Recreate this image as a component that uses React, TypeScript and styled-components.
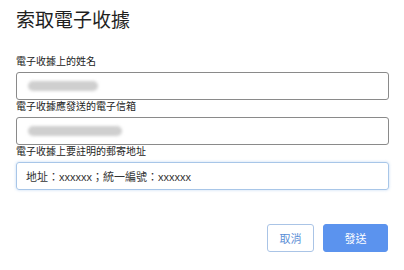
import React from 'react';
import styled, { createGlobalStyle } from 'styled-components';

const Global = createGlobalStyle`
  body {
    margin: 0;
    background: #fff;
    font-family: "Liberation Sans", "Noto Sans CJK TC", sans-serif;
    color: #222;
  }
`;

const Dialog = styled.div`
  width: 404px;
  height: 270px;
  box-sizing: border-box;
  padding: 9px 15px 0 16px;
`;

const Title = styled.h1`
  margin: 0 0 22px;
  font-size: 19px;
  line-height: 24px;
  font-weight: 400;
  color: #1f1f1f;
`;

const Label = styled.div`
  font-size: 10px;
  line-height: 13px;
  color: #222;
  margin-bottom: 4px;
`;

const Field = styled.div<{ $focused?: boolean }>`
  box-sizing: border-box;
  height: 28px;
  display: flex;
  align-items: center;
  padding: 0 9px;
  border: 1px solid ${p => (p.$focused ? '#a8c6e8' : '#8a8a8a')};
  border-radius: 3px;
  box-shadow: ${p => (p.$focused ? '0 0 3px rgba(120,170,230,0.45)' : 'none')};
  font-size: 11px;
  color: #333;
`;

const Blur = styled.span<{ $w: number }>`
  display: block;
  width: ${p => p.$w}px;
  height: 10px;
  border-radius: 5px;
  background: #cfcfcf;
  filter: blur(1.5px);
  margin-left: 2px;
`;

const Footer = styled.div`
  display: flex;
  justify-content: flex-end;
  gap: 9px;
  margin-top: 34px;
  padding-right: 1px;
`;

const Button = styled.button<{ $primary?: boolean }>`
  box-sizing: border-box;
  height: 28px;
  width: ${p => (p.$primary ? 65 : 47)}px;
  border-radius: 3px;
  font-family: inherit;
  font-size: 11px;
  border: 1px solid ${p => (p.$primary ? '#5b93ee' : '#aac4e6')};
  background: ${p => (p.$primary ? '#5b93ee' : '#fff')};
  color: ${p => (p.$primary ? '#fff' : '#5a8ed6')};
  padding: 0;
`;

export default function App() {
  return (
    <Dialog>
      <Global />
      <Title>索取電子收據</Title>
      <Label>電子收據上的姓名</Label>
      <Field>
        <Blur $w={70} />
      </Field>
      <Label>電子收據應發送的電子信箱</Label>
      <Field>
        <Blur $w={94} />
      </Field>
      <Label>電子收據上要註明的郵寄地址</Label>
      <Field $focused>地址：xxxxxx；統一編號：xxxxxx</Field>
      <Footer>
        <Button>取消</Button>
        <Button $primary>發送</Button>
      </Footer>
    </Dialog>
  );
}
